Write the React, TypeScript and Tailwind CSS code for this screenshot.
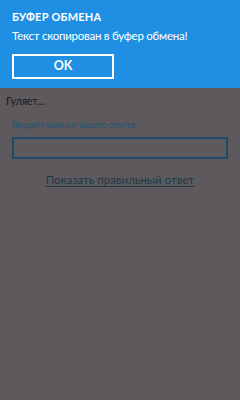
import React from 'react'

export default function App() {
  return (
    <div
      className="w-[240px] h-[400px] bg-[#5d595c] flex flex-col overflow-hidden"
      style={{ fontFamily: 'Lato, "Noto Sans", sans-serif' }}
    >
      {/* clipboard popup */}
      <div className="h-[88px] bg-[#1e8fe2] px-3 pt-[10px] text-white">
        <div className="text-[11px] font-bold leading-[14px] tracking-[0.2px]">БУФЕР ОБМЕНА</div>
        <div className="mt-[3px] text-[11.5px] leading-[17px] tracking-[-0.25px]">Текст скопирован в буфер обмена!</div>
        <button className="mt-[10px] w-[102px] h-[25px] border-2 border-white flex items-center justify-center text-[12.5px] font-bold">
          OK
        </button>
      </div>

      {/* page behind the overlay */}
      <div className="pl-[6px] pt-[6px] text-[10.5px] leading-[14px] text-[#1a1819]">Гуляет...</div>
      <div className="px-3 pt-[10px]">
        <div className="text-[9px] leading-[13px] tracking-[-0.35px] text-[#265577]">Введите вариант вашего ответа:</div>
        <div className="mt-[6px] h-[22px] border-2 border-[#1f4a68]"></div>
        <div className="mt-[7px] text-center">
          <span className="text-[11.5px] leading-[16px] text-[#1d3a48] underline underline-offset-2">
            Показать правильный ответ
          </span>
        </div>
      </div>
    </div>
  )
}
